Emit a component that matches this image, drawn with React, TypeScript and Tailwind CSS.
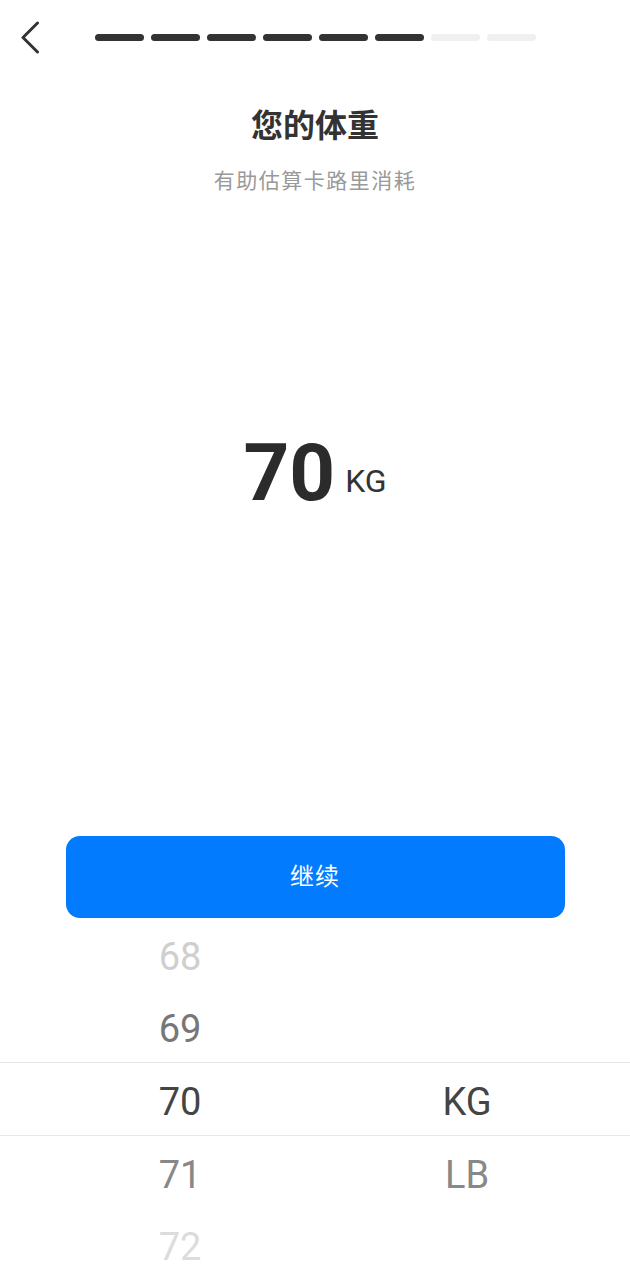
import { useState } from 'react'

const steps = 8
const doneSteps = 6
const rows = [
  { value: 68, unit: '', color: 'text-[#cfcfcf]' },
  { value: 69, unit: '', color: 'text-[#777]' },
  { value: 70, unit: 'KG', color: 'text-[#444]' },
  { value: 71, unit: 'LB', color: 'text-[#888]' },
  { value: 72, unit: '', color: 'text-[#dcdcdc]' },
]

export default function App() {
  const [weight] = useState(70)
  const [unit] = useState('KG')

  return (
    <div className="flex min-h-[1280px] w-[630px] flex-col bg-white font-['Roboto','Noto_Sans_CJK_SC',sans-serif] text-[#333]">
      <div className="flex h-[75px] items-center">
        <button type="button" className="ml-[20px] h-[34px] w-[20px]">
          <svg width="20" height="34" viewBox="0 0 20 34" fill="none">
            <path d="M17.5 2 L3 16.5 L17.5 31" stroke="#333" strokeWidth="3" strokeLinecap="round" strokeLinejoin="round" />
          </svg>
        </button>
        <div className="ml-[55px] flex gap-[7px]">
          {Array.from({ length: steps }).map((_, i) => (
            <span key={i} className={`block h-[7px] w-[49px] rounded-full ${i < doneSteps ? 'bg-[#333]' : 'bg-[#f0f0f0]'}`} />
          ))}
        </div>
      </div>

      <h1 className="mt-[31px] text-center text-[32px] font-bold leading-[40px] text-[#333]">您的体重</h1>
      <p className="mt-[21px] text-center text-[21px] leading-[28px] tracking-[1.5px] text-[#999]">有助估算卡路里消耗</p>

      <div className="mt-[238px] flex items-end justify-center">
        <span className="text-[80px] font-bold leading-none text-[#2b2b2b]">{weight}</span>
        <span className="mb-[16px] ml-[10px] text-[32px] leading-none text-[#333]">{unit}</span>
      </div>

      <button type="button" className="mx-auto mt-[323px] h-[82px] w-[499px] rounded-[14px] bg-[#037bfe] text-[24px] tracking-[1px] text-white">
        继续
      </button>

      <div className="text-[38px]">
        {rows.map((row, i) => (
          <div
            key={row.value}
            className={`grid grid-cols-[360px_214px] pt-[6px] leading-[66px] ${i === 2 ? 'h-[74px] border-y border-[#e8e8e8]' : 'h-[72px]'}`}
          >
            <span className={`text-center ${row.color}`}>{row.value}</span>
            <span className={`text-center ${row.color}`}>{row.unit}</span>
          </div>
        ))}
      </div>
    </div>
  )
}
